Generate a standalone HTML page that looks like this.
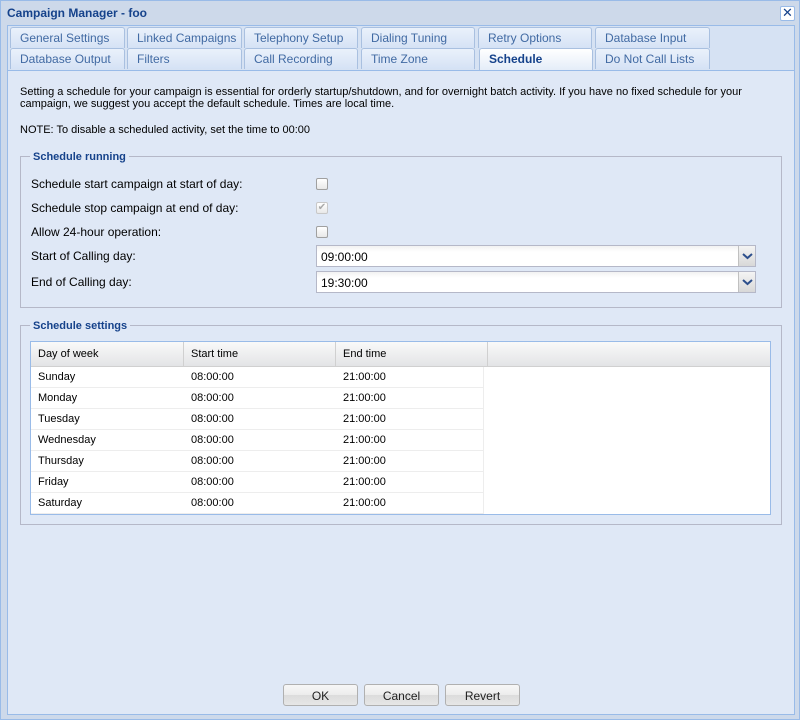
<!DOCTYPE html>
<html><head><style>
*{box-sizing:border-box;margin:0;padding:0}
body{width:800px;height:720px;background:#cdd9ea;font-family:"Liberation Sans",Tahoma,sans-serif;font-size:12px;color:#000;position:relative;overflow:hidden}
.win{position:absolute;left:0;top:0;width:800px;height:720px;border:1px solid #99bbe8;background:#cdd9ea}
.title{position:absolute;left:6px;top:5px;font-weight:bold;color:#15428b;font-size:12px}
.close{position:absolute;left:779px;top:5px;width:15px;height:15px;border:1px solid #99bbe8;background:#fff;border-radius:2px;color:#15428b;font-size:13px;line-height:12px;text-align:center}
.strip{position:absolute;left:6px;top:24px;width:788px;height:46px;background:#d6e2f3;border:1px solid #99bbe8;border-bottom:none}
.tab{position:absolute;height:21px;border:1px solid #a9c0e0;border-bottom:none;border-radius:3px 3px 0 0;background:linear-gradient(#eaf1fb,#d5e2f5);color:#416aa3;padding:3px 0 0 9px;font-size:12px}
.tab.sel{background:linear-gradient(#fff,#e3ecf8);color:#15428b;font-weight:bold}
.panel{position:absolute;left:6px;top:69px;width:788px;height:645px;background:#dfe8f6;border:1px solid #99bbe8}
.t{position:absolute;white-space:nowrap}
.p{font-size:11px;line-height:12px}
fieldset{position:absolute;border:1px solid #b5b8c8}
.leg{position:absolute;background:#dfe8f6;color:#15428b;font-weight:bold;padding:0 3px}
.cb{position:absolute;width:12px;height:12px;border:1px solid #a0a0a0;border-radius:2px;background:linear-gradient(#fff,#e8e8e8)}
.combo{position:absolute;height:22px;border:1px solid #b5b8c8;background:linear-gradient(#f2f2f2 0,#fff 6px);padding:4px 0 0 4px}
.combo .tr{position:absolute;right:0;top:0;width:17px;height:20px;border-left:1px solid #c0c0c0;background:linear-gradient(#f4f4f4,#d8d8d8)}
.grid{position:absolute;left:29px;top:340px;width:741px;height:174px;border:1px solid #99bbe8;background:#fff;font-size:11px}
.hd{position:absolute;top:0;height:25px;border-right:1px solid #d0d0d0;border-bottom:1px solid #d0d0d0;background:linear-gradient(#f9f9f9,#e3e4e6);padding:6px 0 0 7px}
.row{position:absolute;left:0;width:452px;height:21px;border-bottom:1px solid #ededed}
.row span{position:absolute;top:4px}
.btn{position:absolute;top:683px;width:75px;height:22px;border:1px solid #b0b0b0;border-radius:3px;background:linear-gradient(#f7f7f7 0,#ececec 50%,#dcdcdc 51%,#e6e6e6);text-align:center;padding-top:4px;color:#222}
</style></head><body>
<div class="win">
<div class="title">Campaign Manager - foo</div>
<div class="close">✕</div>
<div class="strip"></div>
<div class="tab" style="left:9px;top:26px;width:115px">General Settings</div>
<div class="tab" style="left:126px;top:26px;width:115px">Linked Campaigns</div>
<div class="tab" style="left:243px;top:26px;width:114px">Telephony Setup</div>
<div class="tab" style="left:360px;top:26px;width:114px">Dialing Tuning</div>
<div class="tab" style="left:477px;top:26px;width:114px">Retry Options</div>
<div class="tab" style="left:594px;top:26px;width:115px">Database Input</div>
<div class="tab" style="left:9px;top:47px;width:115px">Database Output</div>
<div class="tab" style="left:126px;top:47px;width:115px">Filters</div>
<div class="tab" style="left:243px;top:47px;width:114px">Call Recording</div>
<div class="tab" style="left:360px;top:47px;width:114px">Time Zone</div>
<div class="tab sel" style="left:478px;top:47px;width:114px;height:23px">Schedule</div>
<div class="tab" style="left:594px;top:47px;width:115px">Do Not Call Lists</div>
<div class="panel"></div>
<div class="t p" style="left:19px;top:85px">Setting a schedule for your campaign is essential for orderly startup/shutdown, and for overnight batch activity. If you have no fixed schedule for your</div>
<div class="t p" style="left:19px;top:97px">campaign, we suggest you accept the default schedule. Times are local time.</div>
<div class="t p" style="left:19px;top:123px">NOTE: To disable a scheduled activity, set the time to 00:00</div>
<fieldset style="left:19px;top:155px;width:762px;height:152px"></fieldset>
<div class="leg p" style="left:29px;top:150px">Schedule running</div>
<div class="t" style="left:30px;top:176px">Schedule start campaign at start of day:</div>
<div class="cb" style="left:315px;top:177px"></div>
<div class="t" style="left:30px;top:200px">Schedule stop campaign at end of day:</div>
<div class="cb" style="left:315px;top:201px;border-color:#c8c8c8;color:#aaa;font-size:10px;line-height:10px;text-align:center">✔</div>
<div class="t" style="left:30px;top:224px">Allow 24-hour operation:</div>
<div class="cb" style="left:315px;top:225px"></div>
<div class="t" style="left:30px;top:248px">Start of Calling day:</div>
<div class="combo" style="left:315px;top:244px;width:440px">09:00:00<div class="tr"><svg width="17" height="20"><path d="M4 8l4.5 4 4.5-4" stroke="#2d4f8c" stroke-width="2" fill="none"/></svg></div></div>
<div class="t" style="left:30px;top:274px">End of Calling day:</div>
<div class="combo" style="left:315px;top:270px;width:440px">19:30:00<div class="tr"><svg width="17" height="20"><path d="M4 8l4.5 4 4.5-4" stroke="#2d4f8c" stroke-width="2" fill="none"/></svg></div></div>
<fieldset style="left:19px;top:324px;width:762px;height:200px"></fieldset>
<div class="leg p" style="left:29px;top:319px">Schedule settings</div>
<div class="grid">
<div class="hd" style="left:0;width:153px">Day of week</div>
<div class="hd" style="left:153px;width:152px">Start time</div>
<div class="hd" style="left:305px;width:152px">End time</div>
<div class="hd" style="left:457px;width:282px;border-right:none"></div>
<div class="row" style="top:25px"><span style="left:7px">Sunday</span><span style="left:160px">08:00:00</span><span style="left:312px">21:00:00</span></div>
<div class="row" style="top:46px"><span style="left:7px">Monday</span><span style="left:160px">08:00:00</span><span style="left:312px">21:00:00</span></div>
<div class="row" style="top:67px"><span style="left:7px">Tuesday</span><span style="left:160px">08:00:00</span><span style="left:312px">21:00:00</span></div>
<div class="row" style="top:88px"><span style="left:7px">Wednesday</span><span style="left:160px">08:00:00</span><span style="left:312px">21:00:00</span></div>
<div class="row" style="top:109px"><span style="left:7px">Thursday</span><span style="left:160px">08:00:00</span><span style="left:312px">21:00:00</span></div>
<div class="row" style="top:130px"><span style="left:7px">Friday</span><span style="left:160px">08:00:00</span><span style="left:312px">21:00:00</span></div>
<div class="row" style="top:151px"><span style="left:7px">Saturday</span><span style="left:160px">08:00:00</span><span style="left:312px">21:00:00</span></div>
<div style="position:absolute;left:452px;top:25px;width:1px;height:147px;background:#ededed"></div>
</div>
<div class="btn" style="left:282px">OK</div>
<div class="btn" style="left:363px">Cancel</div>
<div class="btn" style="left:444px">Revert</div>
</div>
</body></html>
